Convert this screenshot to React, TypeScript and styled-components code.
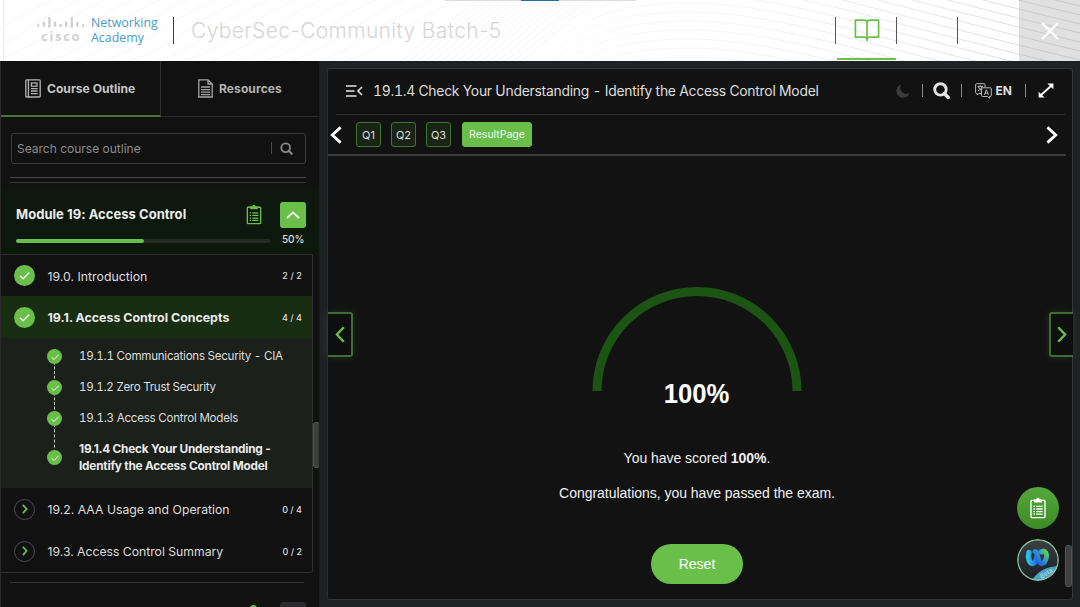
import React from 'react';
import styled, { createGlobalStyle } from 'styled-components';

const Global = createGlobalStyle`
  * { box-sizing: border-box; }
  body { margin: 0; background: #1f2225; overflow: hidden; }
`;

const green = '#6abf4b';

const Page = styled.div`
  width: 1080px;
  height: 607px;
  overflow: hidden;
  display: flex;
  flex-direction: column;
  background: #1f2225;
  color: #e0e0e0;
  font-family: Inter, 'Liberation Sans', sans-serif;
  font-size: 13px;
`;

const Text = styled.span<{ $size?: number; $weight?: number; $ls?: number; $color?: string; $tnum?: boolean }>`
  font-size: ${(p) => p.$size ?? 13}px;
  font-weight: ${(p) => p.$weight ?? 400};
  letter-spacing: ${(p) => p.$ls ?? 0}px;
  color: ${(p) => p.$color ?? '#dedede'};
  font-variant-numeric: ${(p) => (p.$tnum ? 'tabular-nums' : 'normal')};
  white-space: nowrap;
`;

/* ---------- header ---------- */
const Header = styled.header`
  position: relative;
  height: 61px;
  flex: none;
  display: flex;
  background: #fff;
`;
const Waves = styled.svg`
  position: absolute;
  inset: 0;
`;
const TopStrip = styled.div`
  position: absolute;
  top: 0;
  left: 445px;
  width: 191px;
  height: 1px;
  background: #dcdcdc;
  padding-left: 76px;
`;
const StripMark = styled.div`
  width: 38px;
  height: 1px;
  background: #2a6f9c;
`;
const Brand = styled.div`
  position: relative;
  display: flex;
  align-items: flex-start;
  width: 174px;
  height: 27px;
  margin-top: 17px;
  padding-left: 36px;
  border-right: 1px solid #3c3c3c;
`;
const BrandMark = styled.div`
  width: 55px;
`;
const BrandBars = styled.svg`
  display: block;
`;
const BrandName = styled.div`
  font: 700 13px/14px 'Open Sans', sans-serif;
  letter-spacing: 1.7px;
  color: #d2d2d2;
  padding-left: 5px;
`;
const Academy = styled.div`
  display: flex;
  flex-direction: column;
  font: 400 12.4px/14.5px 'Open Sans', sans-serif;
  color: #4a9cc4;
  margin-top: -1px;
  white-space: nowrap;
`;
const CourseTitle = styled.div`
  position: relative;
  flex: 1;
  margin: 17px 0 0 17px;
  font-size: 21px;
  line-height: 28px;
  font-weight: 300;
  letter-spacing: 0.34px;
  color: #d6d6d6;
`;
const HeaderCell = styled.div<{ $active?: boolean }>`
  position: relative;
  width: 61px;
  height: 60px;
  padding-left: 2px;
  display: flex;
  align-items: center;
  justify-content: center;
  &::before {
    content: '';
    position: absolute;
    left: 0;
    top: 17px;
    height: 27px;
    width: 1px;
    background: #555;
  }
  &::after {
    content: '';
    position: absolute;
    left: 2px;
    right: 0;
    bottom: 0;
    height: 2px;
    background: ${(p) => (p.$active ? green : 'transparent')};
  }
`;
const CloseCell = styled.div`
  position: relative;
  width: 61px;
  margin-left: 1px;
  background: rgba(170, 170, 172, 0.36);
  display: flex;
  align-items: center;
  justify-content: center;
`;

/* ---------- sidebar ---------- */
const Body = styled.div`
  flex: 1;
  min-height: 0;
  display: flex;
`;
const Sidebar = styled.aside`
  position: relative;
  width: 320px;
  height: 546px;
  overflow: hidden;
  background: #111;
  border-left: 1px solid #2a2a2a;
  border-right: 1px solid #1d1d1d;
`;
const Tabs = styled.div`
  display: flex;
  height: 56px;
`;
const Tab = styled.div<{ $active?: boolean }>`
  width: ${(p) => (p.$active ? 160 : 158)}px;
  display: flex;
  align-items: center;
  gap: 6px;
  padding: 0 0 ${(p) => (p.$active ? 0 : 1)}px ${(p) => (p.$active ? 24 : 37)}px;
  border-right: 1px solid ${(p) => (p.$active ? '#303030' : 'transparent')};
  border-bottom: ${(p) => (p.$active ? '2px solid #47752f' : '1px solid #2c2c2c')};
`;
const SearchBox = styled.div`
  display: flex;
  align-items: center;
  width: 295px;
  height: 31px;
  margin: 16px 0 0 10px;
  padding: 0 0 1px 5px;
  border: 1px solid #3c3c3c;
  border-radius: 3px;
`;
const SearchSep = styled.i`
  width: 1px;
  height: 12px;
  margin: 0 8px 0 auto;
  background: #4c4c4c;
`;
const SearchIconWrap = styled.div`
  display: flex;
  margin-right: 12px;
`;
const DoubleRule = styled.div`
  margin: 13px 13px 0 9px;
  height: 6px;
  border-top: 1px solid #484848;
  border-bottom: 1px solid #3a3a3a;
`;
const Module = styled.section`
  height: 71px;
  padding: 18px 0 0 15px;
  background: linear-gradient(#111 0, #0e180e 12px, #0d180d);
`;
const ModuleHead = styled.div`
  display: flex;
  align-items: center;
  height: 27px;
`;
const ModuleTitle = styled.div`
  width: 230px;
  padding-bottom: 1px;
`;
const CollapseButton = styled.div`
  width: 26px;
  height: 26px;
  margin-left: 18px;
  border-radius: 3px;
  background: ${green};
  display: flex;
  align-items: center;
  justify-content: center;
`;
const ProgressRow = styled.div`
  display: flex;
  align-items: center;
  height: 22px;
  gap: 11px;
`;
const Track = styled.div`
  width: 255px;
  height: 4px;
  margin-top: 3px;
  border-radius: 2px;
  background: #222a22;
`;
const Fill = styled.div`
  width: 50%;
  height: 4px;
  border-radius: 2px;
  background: ${green};
`;
const List = styled.div`
  width: 312px;
  height: 319px;
  border: 1px solid #303230;
  border-left: 0;
  border-radius: 0 0 3px 0;
`;
const Row = styled.div<{ $active?: boolean; $h?: number }>`
  display: flex;
  align-items: center;
  height: ${(p) => p.$h ?? 42}px;
  padding: 0 10px 0 13px;
  background: ${(p) => (p.$active ? '#182d11' : 'transparent')};
`;
const RowLabel = styled.div`
  flex: 1;
  padding-left: 12.5px;
`;
const SubList = styled.div`
  height: 150px;
  background: #1b201b;
  padding-top: 3px;
`;
const SubRow = styled.div<{ $h: number }>`
  position: relative;
  display: flex;
  align-items: center;
  height: ${(p) => p.$h}px;
  padding-left: 46px;
`;
const Link = styled.i<{ $h: number }>`
  position: absolute;
  left: 53px;
  top: 50%;
  height: ${(p) => p.$h}px;
  border-left: 1px dashed #c8c8c8;
`;
const SubLabel = styled.div`
  padding: 0 0 1px 17px;
  line-height: 16.5px;
`;
const Dot = styled.div<{ $s: number; $open?: boolean }>`
  position: relative;
  flex: none;
  width: ${(p) => p.$s}px;
  height: ${(p) => p.$s}px;
  border-radius: 50%;
  background: ${(p) => (p.$open ? 'transparent' : green)};
  border: ${(p) => (p.$open ? '1px solid #4a4d5a' : '0')};
  display: flex;
  align-items: center;
  justify-content: center;
`;
const BottomRule = styled.div`
  height: 1px;
  margin: 9px 15px 0 9px;
  background: #353535;
`;
const NextModule = styled.div`
  display: flex;
  align-items: flex-start;
  margin-top: 19px;
  padding-left: 249px;
`;
const NextIcon = styled.div`
  width: 7px;
  height: 7px;
  margin-top: 3px;
  border-radius: 50%;
  background: ${green};
`;
const NextButton = styled.div`
  width: 26px;
  height: 20px;
  margin-left: 23px;
  border-radius: 3px;
  background: #2a2a2c;
`;
const Thumb = styled.div<{ $top: number; $h: number; $left: number }>`
  position: absolute;
  left: ${(p) => p.$left}px;
  top: ${(p) => p.$top}px;
  width: 7px;
  height: ${(p) => p.$h}px;
  border-radius: 3px;
  background: #3d3e40;
  border: 1px solid #555658;
`;

/* ---------- content ---------- */
const Main = styled.main`
  position: relative;
  width: 746px;
  height: 532px;
  margin: 7px 0 0 7px;
  background: #121212;
  border: 1px solid #36383a;
  border-left-color: #2b2d2f;
  border-radius: 3px;
`;
const TitleBar = styled.div`
  display: flex;
  align-items: center;
  height: 46px;
  margin: 0 7px 0 8px;
  padding: 0 11px 2px 10px;
  border-bottom: 1px solid #2f2f2f;
`;
const PageTitle = styled.div`
  flex: 1;
  padding-left: 10px;
`;
const Sep = styled.i<{ $ml: number; $mr: number }>`
  width: 1px;
  height: 13px;
  background: #8a8a8a;
  margin: 0 ${(p) => p.$mr}px 0 ${(p) => p.$ml}px;
`;
const Language = styled.div`
  display: flex;
  align-items: center;
  gap: 4px;
`;
const Pager = styled.div`
  display: flex;
  align-items: center;
  height: 41px;
  margin-right: 6px;
  padding: 0 8px 0 2px;
  border-bottom: 2px solid #3a3a3a;
`;
const Chip = styled.div<{ $active?: boolean; $ml: number }>`
  width: ${(p) => (p.$active ? 70 : 25)}px;
  height: 25px;
  margin-left: ${(p) => p.$ml}px;
  border-radius: 3px;
  border: 1px solid ${(p) => (p.$active ? green : '#41752f')};
  background: ${(p) => (p.$active ? green : '#1a2416')};
  display: flex;
  align-items: center;
  justify-content: center;
`;
const Spacer = styled.div`
  flex: 1;
`;
const Result = styled.div`
  display: flex;
  flex-direction: column;
  align-items: center;
  width: 738px;
  padding-top: 131px;
  font-family: 'Liberation Sans', Arial, sans-serif;
`;
const Gauge = styled.svg`
  display: block;
`;
const Score = styled.div`
  margin-top: -15px;
  font-size: 27px;
  line-height: 32px;
  font-weight: 700;
  color: #fff;
  transform: scaleX(0.95);
`;
const Line = styled.p<{ $mt: number }>`
  margin: ${(p) => p.$mt}px 0 0;
  font-size: 14px;
  line-height: 18px;
  letter-spacing: -0.03px;
  color: #f0f0f0;
  white-space: nowrap;
`;
const Reset = styled.div`
  width: 92px;
  height: 40px;
  margin-top: 42px;
  border-radius: 20px;
  background: ${green};
  color: #fff;
  font-size: 14px;
  display: flex;
  align-items: center;
  justify-content: center;
`;
const SideArrow = styled.div<{ $right?: boolean }>`
  position: absolute;
  top: 243px;
  ${(p) => (p.$right ? 'right: -1px;' : 'left: 0;')}
  width: ${(p) => (p.$right ? 24 : 25)}px;
  height: 45px;
  border: 2px solid #3b7030;
  ${(p) => (p.$right ? 'border-right: 0; border-radius: 3px 0 0 3px;' : 'border-left: 0; border-radius: 0 3px 3px 0;')}
  background: #0e0f0e;
  box-shadow: 0 0 8px rgba(80, 110, 70, 0.3);
  display: flex;
  align-items: center;
  justify-content: center;
`;
const Fab = styled.div<{ $top: number; $dark?: boolean }>`
  position: absolute;
  left: 688.5px;
  top: ${(p) => p.$top}px;
  width: 42px;
  height: 42px;
  border-radius: 50%;
  overflow: hidden;
  background: ${(p) => (p.$dark ? 'transparent' : 'linear-gradient(#55a83a, #3c8a28)')};
  display: flex;
  align-items: center;
  justify-content: center;
`;

const Check = ({ s }: { s: number }) => (
  <svg width={s} height={s} viewBox="0 0 12 12" fill="none" stroke="#f0f8ec" strokeWidth="1.2">
    <path d="M1.8 6.2 L4.8 9 L10.4 3.2" />
  </svg>
);
const Chevron = ({ w, h, sw, color, d = 'right' }: { w: number; h: number; sw: number; color: string; d?: 'left' | 'right' }) => (
  <svg width={w} height={h} viewBox={`0 0 ${w} ${h}`} fill="none" stroke={color} strokeWidth={sw}>
    <path d={d === 'right' ? `M${sw / 2} ${sw / 2} L${w - sw * 0.8} ${h / 2} L${sw / 2} ${h - sw / 2}` : `M${w - sw / 2} ${sw / 2} L${sw * 0.8} ${h / 2} L${w - sw / 2} ${h - sw / 2}`} />
  </svg>
);
const Clipboard = ({ color, w, h }: { color: string; w: number; h: number }) => (
  <svg width={w} height={h} viewBox="0 0 16 22" fill="none" stroke={color} strokeWidth="1.4">
    <rect x="1" y="3.4" width="14" height="17.2" rx="0.8" />
    <path d="M4 5.6 V2.6 H6.2 Q6.4 0.8 8 0.8 Q9.6 0.8 9.8 2.6 H12 V5.6 Z" fill={color} stroke="none" />
    <path d="M3.4 9.3 H5 M6.2 9.3 H12.6 M3.4 12 H5 M6.2 12 H12.6 M3.4 14.7 H5 M6.2 14.7 H12.6 M3.4 17.2 H5 M6.2 17.2 H12.6" strokeWidth="1.3" />
  </svg>
);
const Magnifier = ({ s, color, sw }: { s: number; color: string; sw: number }) => (
  <svg width={s} height={s} viewBox="0 0 16 16" fill="none" stroke={color} strokeWidth={sw}>
    <circle cx="7" cy="7" r="5.4" />
    <path d="M10.6 10.8 L14.4 14.6" strokeWidth={sw * 1.2} strokeLinecap="round" />
  </svg>
);

const leftWaves = Array.from({ length: 16 }, (_, i) => {
  const x = i * 27 - 60;
  return `M${x} 61 C${x + 40} 50 ${x + 62} 22 ${x + 112} 0`;
});
const midWaves = Array.from({ length: 16 }, (_, i) => {
  const x = 400 + i * 8;
  return `M${x} 61 C${x + 25} 45 ${x + 45} 20 ${x + 80} 0`;
});
const rightWaves = Array.from({ length: 24 }, (_, i) => {
  const y = -150 + i * 9;
  return `M540 ${y + 50} C580 ${y + 14} 620 ${y} 690 ${y} S850 ${y + 26} 920 ${y + 44} S1030 ${y + 72} 1080 ${y + 84}`;
});
const bars: [number, number, number][] = [
  [1, 7, 3], [6.6, 4.5, 5.5], [12.2, 0, 11], [17.8, 4.5, 5.5], [23.4, 7, 3],
  [29, 4.5, 5.5], [34.6, 0, 11], [40.2, 4.5, 5.5], [45.8, 7, 3],
];

const lessons = [
  { label: '19.1.1 Communications Security - CIA', h: 31, link: 31, ls: -0.27 },
  { label: '19.1.2 Zero Trust Security', h: 31, link: 31, ls: -0.29 },
  { label: '19.1.3 Access Control Models', h: 31, link: 39, ls: -0.25 },
];

export default function App() {
  return (
    <Page>
      <Global />
      <Header>
        <Waves width="1080" height="61" fill="none">
          <defs>
            <linearGradient id="fade" gradientUnits="userSpaceOnUse" x1="540" y1="0" x2="1080" y2="0">
              <stop offset="0" stopColor="#fbfbfd" />
              <stop offset="0.35" stopColor="#f5f5f7" />
              <stop offset="0.7" stopColor="#e7e7ea" />
              <stop offset="1" stopColor="#d8d8db" />
            </linearGradient>
          </defs>
          {leftWaves.map((d) => <path key={d} d={d} stroke="#f7f6f8" />)}
          {midWaves.map((d) => <path key={d} d={d} stroke="#f6f6f9" />)}
          {rightWaves.map((d) => <path key={d} d={d} stroke="url(#fade)" />)}
          <path d="M3.5 0 V61" stroke="#ededed" />
        </Waves>
        <TopStrip><StripMark /></TopStrip>
        <Brand>
          <BrandMark>
            <BrandBars width="50" height="12">
              {bars.map(([x, y, h]) => <rect key={x} x={x} y={y} width="2.4" height={h} rx="1.2" fill="#d0d0d0" />)}
            </BrandBars>
            <BrandName>cisco</BrandName>
          </BrandMark>
          <Academy><span>Networking</span><span>Academy</span></Academy>
        </Brand>
        <CourseTitle>CyberSec-Community Batch-5</CourseTitle>
        <HeaderCell $active>
          <svg width="26" height="24" viewBox="0 0 26 24" fill="none" stroke={green} strokeWidth="1.7" strokeLinejoin="round">
            <path d="M13 4.4 Q12.4 2.2 10 2.2 H1.4 V19.2 H10.6 Q12.4 19.4 13 21 Q13.6 19.4 15.4 19.2 H24.6 V2.2 H16 Q13.6 2.2 13 4.4 Z M13 4.4 V23" />
          </svg>
        </HeaderCell>
        <HeaderCell />
        <HeaderCell />
        <CloseCell>
          <svg width="18" height="18" viewBox="0 0 18 18" stroke="#fff" strokeWidth="2.4"><path d="M1 1 L17 17 M17 1 L1 17" /></svg>
        </CloseCell>
      </Header>
      <Body>
        <Sidebar>
          <Tabs>
            <Tab $active>
              <svg width="16" height="19" viewBox="0 0 16 19" fill="none" stroke="#b4b4b4" strokeWidth="1.3">
                <rect x="0.8" y="0.8" width="14.4" height="17.2" rx="1" />
                <path d="M3.4 1 V18 M6 12 H12.6 M6 14.6 H12.6 M6 9.6 H12.6" />
                <rect x="6.4" y="4" width="5.6" height="3.2" />
              </svg>
              <Text $size={12.1} $weight={700} $color="#c6c6c6">Course Outline</Text>
            </Tab>
            <Tab>
              <svg width="15" height="19" viewBox="0 0 15 19" fill="none" stroke="#a4a4a4" strokeWidth="1.3">
                <path d="M0.8 0.8 H10 L14.2 5 V18 H0.8 Z M10 0.8 V5 H14.2 M3 8 H12 M3 10.6 H12 M3 13.2 H12 M3 15.6 H12" />
              </svg>
              <Text $size={12} $ls={0.1} $weight={700} $color="#b4b4b4">Resources</Text>
            </Tab>
          </Tabs>
          <SearchBox>
            <Text $size={12} $color="#8c8c8c">Search course outline</Text>
            <SearchSep />
            <SearchIconWrap><Magnifier s={13} color="#8a8a8a" sw={2.2} /></SearchIconWrap>
          </SearchBox>
          <DoubleRule />
          <Module>
            <ModuleHead>
              <ModuleTitle><Text $weight={700} $ls={0.04} $color="#ececec">Module 19: Access Control</Text></ModuleTitle>
              <Clipboard color={green} w={16} h={21} />
              <CollapseButton>
                <svg width="14" height="8" viewBox="0 0 14 8" fill="none" stroke="#fff" strokeWidth="1.8"><path d="M1 7 L7 1.4 L13 7" /></svg>
              </CollapseButton>
            </ModuleHead>
            <ProgressRow>
              <Track><Fill /></Track>
              <Text $size={10} $weight={500} $ls={-0.1}>50%</Text>
            </ProgressRow>
          </Module>
          <List>
            <Row $h={41}>
              <Dot $s={21}><Check s={13} /></Dot>
              <RowLabel><Text $size={12.3}>19.0. Introduction</Text></RowLabel>
              <Text $size={9} $weight={500} $ls={0.1}>2 / 2</Text>
            </Row>
            <Row $active>
              <Dot $s={21}><Check s={13} /></Dot>
              <RowLabel><Text $size={12.4} $weight={700} $color="#eaeaea">19.1. Access Control Concepts</Text></RowLabel>
              <Text $size={9} $weight={500}>4 / 4</Text>
            </Row>
            <SubList>
              {lessons.map((l) => (
                <SubRow key={l.label} $h={l.h}>
                  <Link $h={l.link} />
                  <Dot $s={15}><Check s={10} /></Dot>
                  <SubLabel><Text $tnum $size={11.6} $ls={l.ls}>{l.label}</Text></SubLabel>
                </SubRow>
              ))}
              <SubRow $h={47}>
                <Dot $s={15}><Check s={10} /></Dot>
                <SubLabel>
                  <Text $size={11.8} $ls={-0.21} $weight={700} $color="#eaeaea">19.1.4 Check Your Understanding -<br />Identify the Access Control Model</Text>
                </SubLabel>
              </SubRow>
            </SubList>
            <Row>
              <Dot $s={21} $open><Chevron w={6} h={10} sw={1.8} color={green} /></Dot>
              <RowLabel><Text $size={12.25}>19.2. AAA Usage and Operation</Text></RowLabel>
              <Text $size={9} $weight={500}>0 / 4</Text>
            </Row>
            <Row>
              <Dot $s={21} $open><Chevron w={6} h={10} sw={1.8} color={green} /></Dot>
              <RowLabel><Text $size={12.2}>19.3. Access Control Summary</Text></RowLabel>
              <Text $size={9} $weight={500}>0 / 2</Text>
            </Row>
          </List>
          <BottomRule />
          <NextModule><NextIcon /><NextButton /></NextModule>
          <Thumb $left={312} $top={361} $h={46} />
        </Sidebar>
        <Main>
          <TitleBar>
            <svg width="17" height="12" viewBox="0 0 17 12" fill="none" stroke="#e4e4e4" strokeWidth="1.6">
              <path d="M0 1 H10.5 M0 6 H8.5 M0 11 H10.5 M16 2 L12 6 L16 10" />
            </svg>
            <PageTitle><Text $tnum $size={13.9} $ls={-0.25}>19.1.4 Check Your Understanding - Identify the Access Control Model</Text></PageTitle>
            <svg width="14" height="14" viewBox="0 0 14 14" fill="#3c3c3c"><path d="M5 0.6 A6.7 6.7 0 1 0 13.4 9 A6.2 6.2 0 0 1 5 0.6 Z" /></svg>
            <Sep $ml={12} $mr={10} />
            <Magnifier s={17} color="#e4e4e4" sw={2.7} />
            <Sep $ml={11} $mr={13} />
            <Language>
              <svg width="17" height="16" viewBox="0 0 17 16" fill="none" stroke="#b8b8b8" strokeWidth="1">
                <path d="M6 10.5 H3.6 L2.2 12 V10.5 H1.6 Q0.6 10.5 0.6 9.5 V1.7 Q0.6 0.7 1.6 0.7 H9 Q10 0.7 10 1.7 V4.4" />
                <path d="M7.6 4.8 H15.2 Q16.3 4.8 16.3 5.9 V12.4 Q16.3 13.5 15.2 13.5 H14.6 V15.3 L12.6 13.5 H7.6 Q6.5 13.5 6.5 12.4 V5.9 Q6.5 4.8 7.6 4.8 Z" />
                <path d="M2.4 3.4 H8.2 M5.3 2.2 V3.4 M7.2 3.6 Q6 6.6 2.8 8 M3.4 3.8 Q4.4 6.4 6 7.4 M9.3 11.8 L11.4 6.8 L13.5 11.8 M10 10.2 H12.8" />
              </svg>
              <Text $size={12} $weight={700}>EN</Text>
            </Language>
            <Sep $ml={13} $mr={12} />
            <svg width="16" height="15" viewBox="0 0 16 15" fill="#fff" stroke="#fff">
              <path d="M3 12 L13 3" strokeWidth="1.8" />
              <path d="M9.4 0.4 H15.4 V6.2 Z M0.6 8.8 V14.6 H6.6 Z" stroke="none" />
            </svg>
          </TitleBar>
          <Pager>
            <Chevron w={12} h={18} sw={2.8} color="#fff" d="left" />
            <Chip $ml={14}><Text $size={11}>Q1</Text></Chip>
            <Chip $ml={10}><Text $size={11}>Q2</Text></Chip>
            <Chip $ml={10}><Text $size={11}>Q3</Text></Chip>
            <Chip $ml={11} $active><Text $size={10.5} $color="#f4faf2">ResultPage</Text></Chip>
            <Spacer />
            <Chevron w={12} h={18} sw={2.8} color="#fff" />
          </Pager>
          <Result>
            <Gauge width="210" height="106" viewBox="0 0 210 106" fill="none">
              <path d="M5 104 A100 99.5 0 0 1 205 104" stroke="#1c5414" strokeWidth="9" />
            </Gauge>
            <Score>100%</Score>
            <Line $mt={39}>You have scored <b>100%</b>.</Line>
            <Line $mt={17}>Congratulations, you have passed the exam.</Line>
            <Reset>Reset</Reset>
          </Result>
          <SideArrow><Chevron w={10} h={17} sw={2.4} color={green} d="left" /></SideArrow>
          <SideArrow $right><Chevron w={10} h={17} sw={2.4} color={green} /></SideArrow>
          <Fab $top={418}><Clipboard color="#fff" w={16} h={22} /></Fab>
          <Fab $top={470} $dark>
            <svg width="42" height="42" viewBox="0 0 42 42" fill="none">
              <defs>
                <linearGradient id="disc" x1="0" y1="0" x2="0" y2="1"><stop offset="0" stopColor="#3c4042" /><stop offset="1" stopColor="#1c1f22" /></linearGradient>
                <linearGradient id="wl" x1="0" y1="0" x2="1" y2="0"><stop offset="0" stopColor="#2cc0e8" /><stop offset="1" stopColor="#1746e0" /></linearGradient>
                <linearGradient id="wr" x1="0" y1="1" x2="1" y2="0"><stop offset="0" stopColor="#1f50f0" /><stop offset="0.5" stopColor="#2a8cd0" /><stop offset="1" stopColor="#5fd060" /></linearGradient>
                <clipPath id="round"><circle cx="21" cy="21" r="20" /></clipPath>
              </defs>
              <circle cx="21" cy="21" r="20.2" fill="url(#disc)" />
              <path d="M12 13.5 C10.5 19 12.5 24.5 16 24.5 C20 24.5 19.5 14 23 12.5" stroke="url(#wl)" strokeWidth="5.4" strokeLinecap="round" />
              <path d="M18 12.5 C21.5 14 20.5 24.5 24.5 24.5 C28.5 24.5 30.5 17 28.8 14 C27.8 12 26 11.8 24.5 13" stroke="url(#wr)" strokeWidth="5" strokeLinecap="round" />
              <g clipPath="url(#round)">
                <path d="M14 43 Q22 28 42 27 V43 Z" fill="#4aa3bf" />
                <text x="24.5" y="40" transform="rotate(-32 24.5 40)" fontFamily="Inter" fontSize="6.5" fill="#b4dce8">Beta</text>
              </g>
              <circle cx="21" cy="21" r="20.2" stroke="#8cc3a0" strokeWidth="1.4" />
            </svg>
          </Fab>
          <Thumb $left={737} $top={476} $h={42} />
        </Main>
      </Body>
    </Page>
  );
}
